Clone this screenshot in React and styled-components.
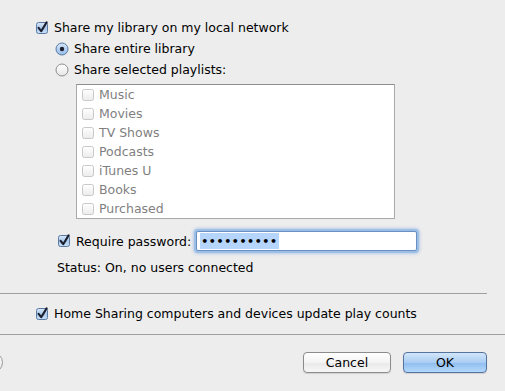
import styled, { createGlobalStyle } from "styled-components";

const GlobalStyle = createGlobalStyle`
  html, body {
    margin: 0;
    padding: 0;
    background: #ededed;
  }
  body {
    font-family: "DejaVu Sans", "Liberation Sans", sans-serif;
    font-size: 12.5px;
    color: #000;
    overflow: hidden;
  }
`;

const Wrapper = styled.div`
  width: 505px;
  height: 391px;
  display: flex;
  flex-direction: column;
  padding-top: 17px;
  box-sizing: border-box;
`;

const Row = styled.label`
  display: flex;
  align-items: center;
  gap: 5px;
  height: 21px;
  padding-left: ${({ indent }) => indent}px;
  white-space: nowrap;
`;

const ListBox = styled.div`
  margin: 4px 0 0 76px;
  width: 317px;
  height: 133px;
  border: 1px solid #a9a9a9;
  border-top-color: #8e8e8e;
  background: #fff;
  display: flex;
  flex-direction: column;
`;

const ListRow = styled.div`
  display: flex;
  align-items: center;
  gap: 4px;
  height: 19px;
  padding-left: 4px;
  color: #7f7f7f;
`;

const PasswordRow = styled.div`
  display: flex;
  align-items: center;
  gap: 5px;
  height: 24px;
  margin: 10px 0 0 57px;
  white-space: nowrap;
`;

const Field = styled.div`
  width: 216px;
  height: 18px;
  border: 1px solid #6a8fc0;
  border-radius: 2px;
  box-shadow: 0 0 0 2px #9cbfe8, 0 0 3px 3px rgba(120, 165, 225, 0.45);
  background: #fff;
  display: flex;
  align-items: center;
  padding-left: 3px;
`;

const Selection = styled.span`
  background: #b5d5fd;
  height: 16px;
  display: flex;
  align-items: center;
  padding: 0 1px;
  letter-spacing: 0.6px;
  font-size: 11px;
  font-weight: bold;
`;

const Status = styled.div`
  margin: 5px 0 0 57px;
  height: 20px;
  line-height: 20px;
`;

const Separator = styled.hr`
  border: none;
  border-top: 1px solid #9f9f9f;
  margin: ${({ gap }) => gap || 0}px 0 0 0;
  width: ${({ full }) => (full ? "505px" : "487px")};
`;

const Footer = styled.div`
  display: flex;
  align-items: center;
  justify-content: flex-end;
  gap: 12px;
  padding: 17px 18px 0 0;
  position: relative;
`;

const HelpEdge = styled.div`
  position: absolute;
  left: -18px;
  top: 17px;
  width: 21px;
  height: 21px;
  border-radius: 50%;
  border: 1px solid #9a9a9a;
  background: linear-gradient(#fff, #e4e4e4);
  box-sizing: border-box;
`;

const Button = styled.button`
  width: ${({ w }) => w}px;
  height: 21px;
  border-radius: 4px;
  font-family: inherit;
  font-size: 12.5px;
  padding: 0;
  color: #000;
  border: 1px solid ${({ primary }) => (primary ? "#55739f" : "#8c8c8c")};
  background: ${({ primary }) =>
    primary
      ? "linear-gradient(#d3e6fa 0%, #a9cdf3 50%, #8fbdef 51%, #b4d8fb 100%)"
      : "linear-gradient(#ffffff 0%, #f4f4f4 50%, #e9e9e9 51%, #f6f6f6 100%)"};
  box-shadow: 0 1px 1px rgba(0, 0, 0, 0.12);
`;

const Checkbox = ({ checked, disabled }) => (
  <svg width="14" height="14" viewBox="0 0 14 14">
    <defs>
      <linearGradient id="cbOn" x1="0" y1="0" x2="0" y2="1">
        <stop offset="0" stopColor="#dbe9f8" />
        <stop offset="0.5" stopColor="#a9c8ec" />
        <stop offset="1" stopColor="#c9e0f8" />
      </linearGradient>
      <linearGradient id="cbOff" x1="0" y1="0" x2="0" y2="1">
        <stop offset="0" stopColor="#ffffff" />
        <stop offset="1" stopColor="#ececec" />
      </linearGradient>
    </defs>
    <rect
      x="1.5"
      y="1.5"
      width="11"
      height="11"
      rx="2"
      fill={checked ? "url(#cbOn)" : "url(#cbOff)"}
      stroke={checked ? "#5a7aa3" : disabled ? "#c8c8c8" : "#8a8a8a"}
    />
    {checked && (
      <path
        d="M3.6 6.8 L6.2 10.2 L11.6 1.4"
        fill="none"
        stroke="#1b1f2e"
        strokeWidth="2.1"
        strokeLinecap="round"
        strokeLinejoin="round"
      />
    )}
  </svg>
);

const Radio = ({ checked }) => (
  <svg width="14" height="14" viewBox="0 0 14 14">
    <defs>
      <linearGradient id="rOn" x1="0" y1="0" x2="0" y2="1">
        <stop offset="0" stopColor="#d6e6f8" />
        <stop offset="1" stopColor="#95bde9" />
      </linearGradient>
      <linearGradient id="rOff" x1="0" y1="0" x2="0" y2="1">
        <stop offset="0" stopColor="#ffffff" />
        <stop offset="1" stopColor="#e6e6e6" />
      </linearGradient>
    </defs>
    <circle
      cx="7"
      cy="7"
      r="6"
      fill={checked ? "url(#rOn)" : "url(#rOff)"}
      stroke={checked ? "#5a7aa3" : "#8e8e8e"}
    />
    {checked && <circle cx="7" cy="7" r="2.2" fill="#1b1f2e" />}
  </svg>
);

const playlists = ["Music", "Movies", "TV Shows", "Podcasts", "iTunes U", "Books", "Purchased"];

export default function App() {
  return (
    <>
      <GlobalStyle />
      <Wrapper>
        <Row indent={35}>
          <Checkbox checked />
          Share my library on my local network
        </Row>
        <Row indent={55}>
          <Radio checked />
          Share entire library
        </Row>
        <Row indent={55}>
          <Radio />
          Share selected playlists:
        </Row>
        <ListBox>
          {playlists.map((p) => (
            <ListRow key={p}>
              <Checkbox disabled />
              {p}
            </ListRow>
          ))}
        </ListBox>
        <PasswordRow>
          <Checkbox checked />
          <span>Require password:</span>
          <Field>
            <Selection>{"\u2022".repeat(10)}</Selection>
          </Field>
        </PasswordRow>
        <Status>Status: On, no users connected</Status>
        <Separator gap={15} />
        <Row indent={35} style={{ marginTop: 9, marginBottom: 10 }}>
          <Checkbox checked />
          Home Sharing computers and devices update play counts
        </Row>
        <Separator full />
        <Footer>
          <HelpEdge />
          <Button w={88}>Cancel</Button>
          <Button w={84} primary>
            OK
          </Button>
        </Footer>
      </Wrapper>
    </>
  );
}
